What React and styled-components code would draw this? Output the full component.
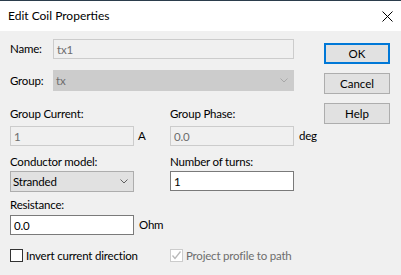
import React from 'react';
import styled, { createGlobalStyle } from 'styled-components';

const GlobalStyle = createGlobalStyle`
  html, body {
    margin: 0;
    padding: 0;
    background: #f0f0f0;
  }
  body {
    font-family: Lato, "Noto Sans", sans-serif;
    font-size: 11.5px;
    letter-spacing: -0.2px;
    color: #000;
  }
`;

const Window = styled.div`
  width: 401px;
  height: 275px;
  display: flex;
  flex-direction: column;
  background: #f0f0f0;
  overflow: hidden;
`;

const TitleBar = styled.div`
  height: 30px;
  border-top: 1px solid #2b3d4c;
  background: #fff;
  display: flex;
  align-items: center;
  justify-content: space-between;
  padding: 0 8px 0 8px;
`;

const Title = styled.span`
  font-size: 12px;
  letter-spacing: 0;
  color: #000;
  margin-top: -1px;
`;

const Body = styled.div`
  flex: 1;
  display: flex;
  padding: 8px 11px 0 10px;
`;

const Form = styled.div`
  width: 314px;
  display: flex;
  flex-direction: column;
`;

const InlineRow = styled.div`
  display: flex;
  align-items: center;
  height: ${p => p.$h || 20}px;
  margin-bottom: ${p => p.$mb || 0}px;
`;

const InlineLabel = styled.label`
  width: 43px;
  line-height: 16px;
`;

const Grid = styled.div`
  display: grid;
  grid-template-columns: 160px 1fr;
  grid-template-rows: 48px 43px 52px auto;
`;

const Field = styled.div`
  display: flex;
  flex-direction: column;
  align-items: flex-start;
`;

const FieldLabel = styled.label`
  line-height: 16px;
  height: 16px;
  margin-bottom: ${p => p.$mb ?? 3}px;
`;

const Control = styled.div`
  display: flex;
  align-items: center;
`;

const TextBox = styled.div`
  box-sizing: border-box;
  width: ${p => p.$w || 124}px;
  height: 20px;
  padding: 0 3px;
  display: flex;
  align-items: center;
  background: ${p => (p.$disabled ? '#f0f0f0' : '#fff')};
  border: 1px solid ${p => (p.$disabled ? '#cccccc' : '#7a7a7a')};
  color: ${p => (p.$disabled ? '#6d6d6d' : '#000')};
`;

const Combo = styled.div`
  box-sizing: border-box;
  width: ${p => p.$w || 124}px;
  height: 21px;
  padding: 0 5px 0 2px;
  display: flex;
  align-items: center;
  justify-content: space-between;
  background: ${p => (p.$disabled ? '#cccccc' : '#e1e1e1')};
  border: 1px solid ${p => (p.$disabled ? '#cccccc' : '#adadad')};
  color: ${p => (p.$disabled ? '#6d6d6d' : '#000')};
`;

const Unit = styled.span`
  margin-left: ${p => p.$ml || 4}px;
  line-height: 16px;
`;

const CheckRow = styled.div`
  display: flex;
  align-items: center;
  height: 13px;
  color: ${p => (p.$disabled ? '#6d6d6d' : '#000')};
`;

const Box = styled.span`
  box-sizing: border-box;
  width: 13px;
  height: 13px;
  margin-right: 3px;
  background: #fff;
  border: 1px solid ${p => (p.$disabled ? '#cccccc' : '#333')};
  display: flex;
  align-items: center;
  justify-content: center;
`;

const Buttons = styled.div`
  margin-top: 4px;
  display: flex;
  flex-direction: column;
  gap: 9px;
`;

const Button = styled.button`
  box-sizing: border-box;
  width: 66px;
  height: 21px;
  padding: 0;
  font: inherit;
  color: #000;
  background: #e1e1e1;
  border: ${p => (p.$default ? '2px solid #0078d7' : '1px solid #adadad')};
`;

const Chevron = ({ color }) => (
  <svg width="8" height="5" viewBox="0 0 8 5">
    <path d="M0.5 0.5 L4 4 L7.5 0.5" fill="none" stroke={color} strokeWidth="1" />
  </svg>
);

const Close = () => (
  <svg width="11" height="11" viewBox="0 0 11 11">
    <path d="M0.5 0.5 L10.5 10.5 M10.5 0.5 L0.5 10.5" stroke="#000" strokeWidth="1" />
  </svg>
);

const Check = () => (
  <svg width="11" height="11" viewBox="0 0 11 11">
    <path d="M1.5 5.5 L4 8.5 L9.5 1.5" fill="none" stroke="#b9b9b9" strokeWidth="1.3" />
  </svg>
);

const App = () => (
  <Window>
    <GlobalStyle />
    <TitleBar>
      <Title>Edit Coil Properties</Title>
      <Close />
    </TitleBar>
    <Body>
      <Form>
        <InlineRow $mb={11}>
          <InlineLabel>Name:</InlineLabel>
          <TextBox $w={241} $disabled>tx1</TextBox>
        </InlineRow>
        <InlineRow $h={21} $mb={15}>
          <InlineLabel>Group:</InlineLabel>
          <Combo $w={241} $disabled>
            <span>tx</span>
            <Chevron color="#a8a8a8" />
          </Combo>
        </InlineRow>
        <Grid>
          <Field>
            <FieldLabel $mb={4}>Group Current:</FieldLabel>
            <Control>
              <TextBox $disabled>1</TextBox>
              <Unit>A</Unit>
            </Control>
          </Field>
          <Field>
            <FieldLabel $mb={4}>Group Phase:</FieldLabel>
            <Control>
              <TextBox $disabled>0.0</TextBox>
              <Unit $ml={5}>deg</Unit>
            </Control>
          </Field>
          <Field>
            <FieldLabel $mb={1}>Conductor model:</FieldLabel>
            <Combo>
              <span>Stranded</span>
              <Chevron color="#606060" />
            </Combo>
          </Field>
          <Field>
            <FieldLabel $mb={1}>Number of turns:</FieldLabel>
            <TextBox>1</TextBox>
          </Field>
          <Field>
            <FieldLabel $mb={2}>Resistance:</FieldLabel>
            <Control>
              <TextBox>0.0</TextBox>
              <Unit $ml={5}>Ohm</Unit>
            </Control>
          </Field>
          <div />
          <CheckRow>
            <Box />
            Invert current direction
          </CheckRow>
          <CheckRow $disabled>
            <Box $disabled>
              <Check />
            </Box>
            Project profile to path
          </CheckRow>
        </Grid>
      </Form>
      <Buttons>
        <Button $default>OK</Button>
        <Button>Cancel</Button>
        <Button>Help</Button>
      </Buttons>
    </Body>
  </Window>
);

export default App;
